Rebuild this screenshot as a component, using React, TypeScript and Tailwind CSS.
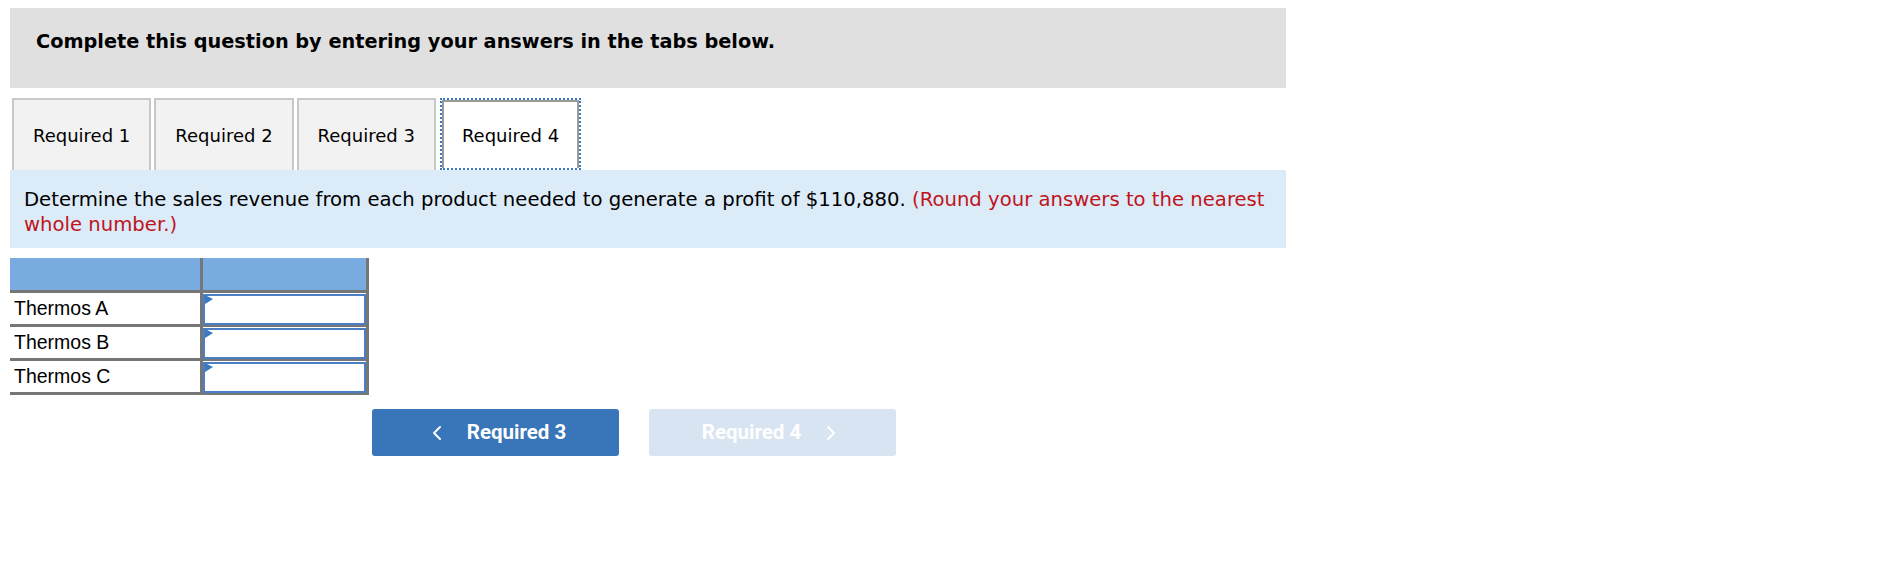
import { ChevronLeft, ChevronRight } from 'lucide-react'

const tabs = ['Required 1', 'Required 2', 'Required 3', 'Required 4']
const rows = ['Thermos A', 'Thermos B', 'Thermos C']

export default function App() {
  const active = 3

  return (
    <div className="min-h-screen bg-white pl-[10px] pt-[8px] font-['DejaVu_Sans',sans-serif] text-black">
      {/* header */}
      <div className="h-[80px] w-[1276px] bg-[#e0e0e0] pl-[26px] pt-[22px]">
        <h2 className="text-[19.3px] font-bold leading-[24px]">
          Complete this question by entering your answers in the tabs below.
        </h2>
      </div>

      {/* tabs */}
      <div className="mt-[10px] flex gap-[3px] pl-[2px]">
        {tabs.map((t, i) =>
          i === active ? (
            <div
              key={t}
              className="ml-[1px] flex h-[72px] items-center border-2 border-dotted border-[#3a78c2] bg-white"
            >
              <div className="flex h-full items-center border-2 border-b-0 border-[#9a9a9a] px-[18px] text-[18px]">
                {t}
              </div>
            </div>
          ) : (
            <div
              key={t}
              className="flex h-[72px] items-center border-2 border-b-0 border-[#c8c8c8] bg-[#f2f2f2] px-[19px] text-[18px]"
            >
              {t}
            </div>
          )
        )}
      </div>

      {/* instructions */}
      <div className="w-[1276px] bg-[#dbebf8] pb-[11px] pl-[14px] pr-[16px] pt-[17px] text-[19.65px] leading-[25px]">
        Determine the sales revenue from each product needed to generate a profit of $110,880.{' '}
        <span className="text-[#c0141c]">(Round your answers to the nearest whole number.)</span>
      </div>

      {/* table */}
      <div className="mt-[10px] w-[359px] font-['Liberation_Sans',Arial,sans-serif] text-[19.5px]">
        <div className="flex h-[35px] border-b-[3px] border-[#767676] bg-[#78abe0]">
          <div className="w-[190px]" />
          <div className="w-[169px] border-x-[3px] border-[#767676]" />
        </div>
        {rows.map((r) => (
          <div key={r} className="flex h-[34px] border-b-[3px] border-[#767676]">
            <div className="flex w-[190px] items-center pl-[4px]">{r}</div>
            <div className="relative w-[169px] border-x-[3px] border-[#767676] bg-white">
              <input
                type="text"
                className="h-full w-full border-2 border-[#4b7fc3] bg-white px-2 text-[16px] outline-none"
              />
              <svg
                className="absolute left-[2px] top-[2px]"
                width="8"
                height="10"
                viewBox="0 0 8 10"
              >
                <polygon points="0,0 8,4 0,9" fill="#3a78c2" />
              </svg>
            </div>
          </div>
        ))}
      </div>

      {/* nav buttons */}
      <div className="ml-[362px] mt-[14px] flex gap-[30px] font-['Roboto',sans-serif]">
        <button className="flex h-[47px] w-[247px] items-center justify-center gap-[18px] rounded-[3px] bg-[#3875b9] text-[20.5px] font-bold text-white">
          <ChevronLeft className="h-[24px] w-[24px]" strokeWidth={2} />
          Required 3
        </button>
        <button
          disabled
          className="flex h-[47px] w-[247px] items-center justify-center gap-[18px] rounded-[3px] bg-[#d8e4f2] text-[20.5px] font-bold text-white"
        >
          Required 4
          <ChevronRight className="h-[24px] w-[24px]" strokeWidth={2} />
        </button>
      </div>
    </div>
  )
}
